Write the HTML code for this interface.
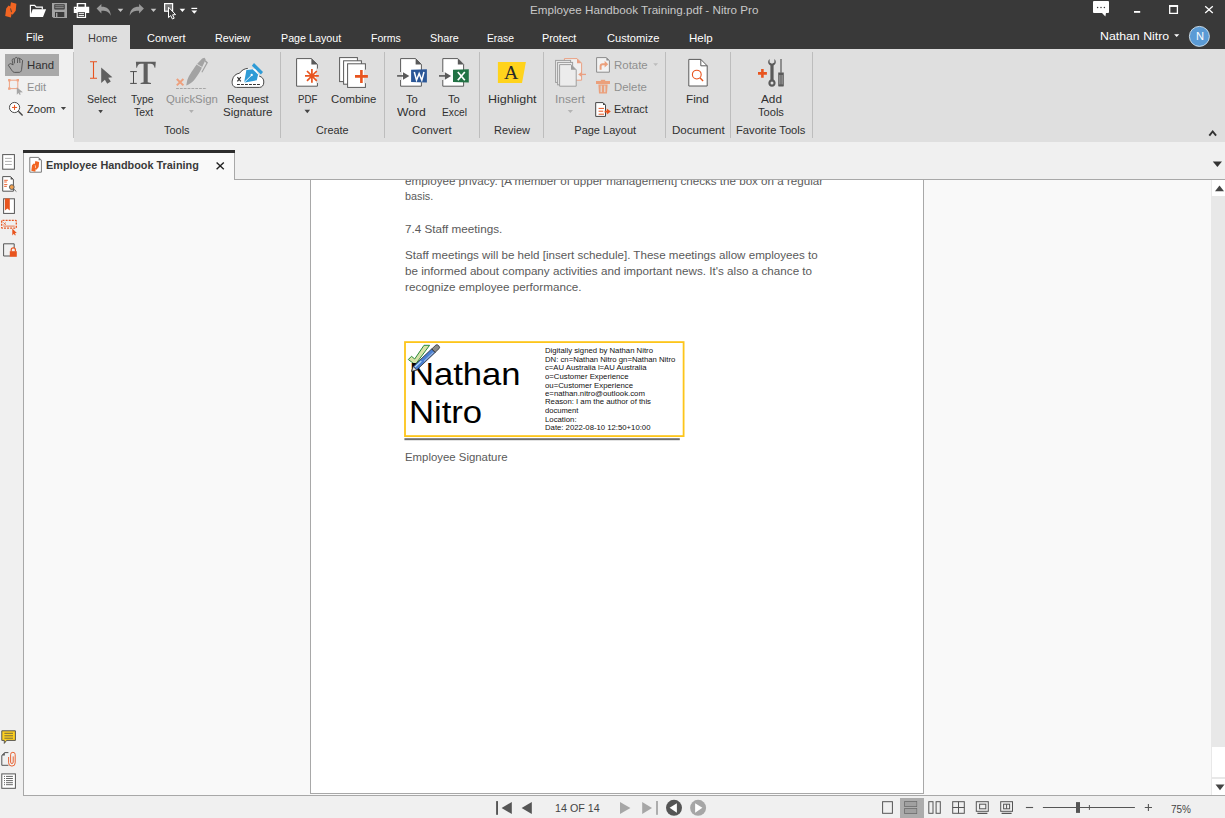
<!DOCTYPE html>
<html><head><meta charset="utf-8"><title>Nitro Pro</title>
<style>
html,body{margin:0;padding:0;}
body{width:1225px;height:818px;overflow:hidden;position:relative;background:#f0f0f0;font-family:"Liberation Sans",sans-serif;}
.b{position:absolute;}
.t{position:absolute;white-space:nowrap;line-height:1.117em;transform-origin:0 0;}
</style></head><body>
<div class="b" style="left:0;top:0;width:1225px;height:49px;background:#393939"></div>
<div class="b" style="left:73px;top:25px;width:57px;height:24px;background:#dfdfdf"></div>
<div class="b" style="left:74px;top:49px;width:1151px;height:93px;background:#dfdfdf"></div>
<div class="b" style="left:73px;top:52px;width:1px;height:86px;background:#c2c2c2"></div>
<div class="b" style="left:5px;top:54px;width:54px;height:22px;background:#a9a9a9"></div>
<div class="b" style="left:280px;top:52px;width:1px;height:86px;background:#bdbdbd"></div>
<div class="b" style="left:384px;top:52px;width:1px;height:86px;background:#bdbdbd"></div>
<div class="b" style="left:479px;top:52px;width:1px;height:86px;background:#bdbdbd"></div>
<div class="b" style="left:543px;top:52px;width:1px;height:86px;background:#bdbdbd"></div>
<div class="b" style="left:665px;top:52px;width:1px;height:86px;background:#bdbdbd"></div>
<div class="b" style="left:730px;top:52px;width:1px;height:86px;background:#bdbdbd"></div>
<div class="b" style="left:812px;top:52px;width:1px;height:86px;background:#bdbdbd"></div>
<!-- doc area -->
<div class="b" style="left:23px;top:179px;width:1202px;height:616px;background:#f9f9f9"></div>
<div class="b" style="left:234px;top:179px;width:991px;height:1px;background:#a8a8a8"></div>
<div class="b" style="left:23px;top:150px;width:1px;height:645px;background:#a8a8a8"></div>
<!-- tab -->
<div class="b" style="left:24px;top:150px;width:210px;height:29px;background:#f9f9f9"></div>
<div class="b" style="left:23px;top:150px;width:212px;height:3px;background:#2d2d2d"></div>
<div class="b" style="left:234px;top:153px;width:1px;height:26px;background:#a8a8a8"></div>
<!-- page -->
<div class="b" style="left:310px;top:180px;width:614px;height:614px;background:#ffffff"></div>
<div class="b" style="left:310px;top:180px;width:1px;height:614px;background:#a8a8a8"></div>
<div class="b" style="left:923px;top:180px;width:1px;height:614px;background:#a8a8a8"></div>
<div class="b" style="left:310px;top:793px;width:614px;height:1px;background:#a8a8a8"></div>
<!-- scrollbar -->
<div class="b" style="left:1211px;top:180px;width:14px;height:615px;background:#e8e8e8"></div>
<div class="b" style="left:1212px;top:180px;width:13px;height:16px;background:#ffffff"></div>
<div class="b" style="left:1212px;top:747px;width:13px;height:30px;background:#ffffff"></div>
<div class="b" style="left:1212px;top:779px;width:13px;height:16px;background:#ffffff"></div>
<!-- status bar -->
<div class="b" style="left:23px;top:795px;width:1202px;height:1px;background:#a8a8a8"></div>
<div class="b" style="left:900px;top:798px;width:24px;height:20px;background:#acacac"></div>

<svg class="b" style="left:0;top:0" width="1225" height="818" viewBox="0 0 1225 818">
<!-- ===== title bar ===== -->
<path fill="#f26522" fill-rule="evenodd" d="M11 2.2 L16.4 3.7 L15.7 10.8 L12.6 14.7 L11.6 13.8 L10.9 17.6 L5.2 16.1 L6.2 8.4 L8.6 5.6 L10.2 6.6 Z M10.2 8.2 L11 8.4 L11.8 11.8 L11.1 12.6 Z"/>
<!-- open folder -->
<path d="M30.4 16.4 V5.4 H34.6 L36.2 7.2 H42.3 V9.4" fill="none" stroke="#fff" stroke-width="1.2"/>
<path d="M32.6 9.3 H46.1 L43 16.9 H30 Z" fill="#fff"/>
<!-- save (gray) -->
<path d="M52 3 H67 V18 H53.5 L52 16.5 Z" fill="#a3a3a3"/>
<rect x="54.3" y="4.2" width="10.4" height="5.2" rx="0.6" fill="#393939"/>
<rect x="55.2" y="5.4" width="8.6" height="0.9" fill="#a3a3a3"/>
<rect x="55.2" y="7.3" width="8.6" height="0.9" fill="#a3a3a3"/>
<rect x="55" y="12" width="9.3" height="5" fill="#393939"/>
<rect x="56" y="12.8" width="1.4" height="4.2" fill="#a3a3a3"/>
<!-- print -->
<path d="M76.7 2.9 H86.1 V6.7 H89.2 V13 H86.1 V18 H76.7 V13 H73.8 V6.7 H76.7 Z" fill="#fff"/>
<rect x="78.2" y="4.2" width="6.4" height="2.5" fill="#393939"/>
<rect x="77.8" y="12.2" width="7.2" height="4.6" fill="#393939"/>
<rect x="78.7" y="13.2" width="5.4" height="0.9" fill="#fff"/>
<rect x="78.7" y="15" width="5.4" height="0.9" fill="#fff"/>
<circle cx="75.5" cy="8.5" r="0.6" fill="#393939"/>
<!-- undo/redo -->
<path d="M96.6 8.6 L101.4 4 V6.8 C106 6.6 110.6 8.6 110.8 15.8 C109 11.6 105.6 10.6 101.4 10.8 V13.4 Z" fill="#9a9a9a"/>
<path d="M143.9 8.6 L139.1 4 V6.8 C134.5 6.6 129.9 8.6 129.7 15.8 C131.5 11.6 134.9 10.6 139.1 10.8 V13.4 Z" fill="#9a9a9a"/>
<path d="M117.7 8.8 H123.3 L120.5 12 Z" fill="#c4c4c4"/>
<path d="M150.7 8.8 H156.3 L153.5 12 Z" fill="#c4c4c4"/>
<!-- select tool -->
<rect x="164.6" y="3.6" width="8" height="7.6" fill="#777" stroke="#fff" stroke-width="1.2"/>
<path d="M168.5 7.2 V17.6 L170.7 15.6 L172.4 19 L174.2 18.2 L172.6 14.8 L175.6 14.6 Z" fill="#393939" stroke="#fff" stroke-width="1"/>
<path d="M179.6 8.8 H185.2 L182.4 12 Z" fill="#fff"/>
<rect x="191.4" y="7.8" width="5.8" height="1.2" fill="#fff"/>
<path d="M191.4 10.4 H197.2 L194.3 13.8 Z" fill="#fff"/>
<!-- chat -->
<path d="M1093 2 Q1093 1.1 1094 1.1 H1108 Q1109 1.1 1109 2 V12.3 Q1109 13.1 1108 13.1 H1106 L1105.4 16.6 L1102 13.1 H1094 Q1093 13.1 1093 12.3 Z" fill="#fff"/>
<circle cx="1097.6" cy="7.4" r="0.75" fill="#393939"/><circle cx="1101" cy="7.4" r="0.75" fill="#393939"/><circle cx="1104.4" cy="7.4" r="0.75" fill="#393939"/>
<!-- window controls -->
<rect x="1134" y="11" width="6.2" height="1.8" fill="#fff"/>
<path d="M1169.7 5.9 H1177.4 V13.3 H1169.7 Z" fill="none" stroke="#fff" stroke-width="1.3"/>
<rect x="1169" y="5.1" width="9.1" height="1.8" fill="#fff"/>
<path d="M1205.2 6.3 L1212.8 12.9 M1212.8 6.3 L1205.2 12.9" stroke="#fff" stroke-width="1.3"/>
<!-- user -->
<path d="M1174.1 34.3 H1179.3 L1176.7 37.1 Z" fill="#fff"/>
<circle cx="1199.4" cy="36.4" r="10" fill="#5b9bd5" stroke="#d6e6f3" stroke-width="0.9"/>

<!-- ===== ribbon ===== -->
<!-- hand -->
<path d="M8.4 65.3 C9 64.2 9.8 63.6 10.4 63.6 C11.6 63.8 12.6 64.6 13.1 65 L12.2 60.6 C12.2 59.6 12.4 59 12.9 58.9 C13.6 58.6 14.2 58.8 14.4 59.4 C14.8 58 15.6 57.4 16.3 57.4 C17 57.4 17.5 57.9 17.7 58.4 C18.2 58 19 58 19.6 58.4 C20.6 59 22.4 59.8 22.6 60.6 L21.6 69.4 C21.4 71 20.6 72.2 19.6 72.3 L14.6 72.4 C13.4 72.4 12.4 71.4 11.4 69.7 Z M14.4 59.4 V63.4 M17.7 58.4 L17.5 63 M19.6 58.4 L19.9 63" fill="none" stroke="#484848" stroke-width="0.85"/>
<!-- edit -->
<rect x="9.4" y="80.2" width="8.4" height="8.4" fill="none" stroke="#efa483" stroke-width="1"/>
<rect x="8.1" y="79" width="2.4" height="2.4" fill="#efa483"/><rect x="16.6" y="79" width="2.4" height="2.4" fill="#efa483"/><rect x="8.1" y="87.4" width="2.4" height="2.4" fill="#efa483"/>
<path d="M16.8 87.2 V94.8 L18.4 93 L19.8 95 L20.8 94.2 L19.6 92.4 L22.9 92.3 Z" fill="#a5a5a5"/>
<!-- zoom -->
<circle cx="14.55" cy="107.5" r="5.1" fill="#fff" stroke="#444" stroke-width="0.95"/>
<path d="M18.4 111.3 L22.6 115.4" stroke="#444" stroke-width="1.4"/>
<path d="M14.55 104.9 V110 M12 107.45 H17.1" stroke="#e8531f" stroke-width="1"/>
<path d="M60.8 107 H66.1 L63.45 110 Z" fill="#444"/>
<!-- select -->
<path d="M93.5 61.5 V78.5 M90 61.8 H97 M90 78.3 H97" stroke="#e8531f" stroke-width="1.1" fill="none"/>
<path d="M101.2 67.4 V83.1 L104.9 79.8 L107.2 83.8 L110.8 81.4 L108.2 77.8 L112.4 77.2 Z" fill="#5f5f5f"/>
<path d="M98.3 110 H102.9 L100.6 113.3 Z" fill="#444"/>
<!-- type text -->
<path d="M135.9 61.8 H155.8 L155.3 67.8 L154.6 67.8 C154 65 153 63.8 150.6 63.8 H147.7 V82.2 L151 82.9 V84 H140.6 V82.9 L143.6 82.2 V63.8 H141 C138.6 63.8 137.6 65 137 67.8 H136.3 Z" fill="#5e5e5e"/>
<path d="M133.5 71.6 V83.4 M130.2 71.6 H136.8 M130.2 83.4 H136.8" stroke="#4a4a4a" stroke-width="1" fill="none"/>
<!-- quicksign -->
<path d="M186.2 85.6 L187.3 80 C189 75.6 191 72.6 196.6 64.5 L202.2 58.4 L204.5 57.7 L205.7 59.6 L201.7 68 C200.4 71 198.4 74.6 193.8 80.5 C191.8 82.6 189.6 84 186.2 85.6 Z" fill="#a3a3a3"/>
<path d="M205.4 60 L208 62.6 L202.4 72.6 L201.4 72.1 L206.3 63.1 L204.8 61.6 Z" fill="#a3a3a3"/>
<path d="M196.4 64 L202.4 67.5" stroke="#dfdfdf" stroke-width="0.9"/>
<path d="M176.8 79 L183.4 85.4 M183.4 79 L176.8 85.4" stroke="#eda07e" stroke-width="2"/>
<path d="M176.1 88.5 H206.8" stroke="#a0a0a0" stroke-width="0.9" stroke-dasharray="2.8 1.03"/>
<path d="M189 110 H193.8 L191.4 113 Z" fill="#b0b0b0"/>
<!-- request signature -->
<path d="M236.5 87.4 C232.4 87.4 231.6 82.8 232.4 80 C233.2 76 236 73.6 239.6 73.2 C241.4 70.4 244.4 68.6 248 68.4 L256 69 L259.2 76.1 C262 76.8 264 79 263.8 82 C263.8 85.5 262 87.4 259.4 87.4 Z" fill="#fff"/>
<path d="M247.8 68.4 C244.4 68.6 241.4 70.4 239.6 73.2 C236 73.6 233.2 76 232.4 80 C231.6 82.8 232.4 87.4 236.5 87.4 H259.4 C262 87.4 263.8 85.5 263.8 82 C264 79 262 76.8 259.2 76.1" fill="none" stroke="#3e3e3e" stroke-width="0.95"/>
<path d="M254 63.1 L263 72.1 L260.9 74.6 L251.9 65.8 Z" fill="#2e9bd6"/>
<path d="M246.4 70.1 L252.7 69.2 L258.1 74.4 L256.8 80.3 L244.8 82.5 L244.4 81.1 Z" fill="#2e9bd6"/>
<path d="M244.8 81.9 L251.2 75.6" stroke="#fff" stroke-width="0.9"/>
<circle cx="251.7" cy="75" r="1.15" fill="#fff"/>
<path d="M237.4 77.2 L240.8 81.4 M240.8 77.2 L237.4 81.4" stroke="#333" stroke-width="1.2"/>
<path d="M237 84.5 H260" stroke="#333" stroke-width="1" stroke-dasharray="2.9 1.1"/>
<!-- PDF -->
<path d="M296.6 58.6 H311.4 L317.4 64.4 V86.2 H296.6 Z" fill="#fff" stroke="#5a5a5a" stroke-width="1"/>
<path d="M311.4 58.6 L317.4 64.4 H311.4 Z" fill="#5a5a5a"/>
<rect x="316" y="68.6" width="3" height="14.4" fill="#dfdfdf"/>
<g stroke="#e8541e" stroke-width="1.7"><path d="M311.9 69 V82.8 M305 75.9 H318.8 M307 71 L316.8 80.8 M316.8 71 L307 80.8"/></g>
<path d="M304.5 109.7 H310.1 L307.3 113.2 Z" fill="#444"/>
<!-- combine -->
<g fill="#fff" stroke="#5a5a5a" stroke-width="1">
<rect x="339.6" y="57.6" width="17.8" height="24"/>
<rect x="343.6" y="60.8" width="17.8" height="23.4"/>
<rect x="347.6" y="63.8" width="17.8" height="23.6"/>
</g>
<rect x="364" y="69.6" width="3" height="13.6" fill="#dfdfdf"/>
<path d="M361.4 70 V82.9 M355 76.4 H367.9" stroke="#e8541e" stroke-width="2.6"/>
<!-- to word -->
<path d="M400.6 58.6 H415.6 L421.4 64.4 V86.2 H400.6 Z" fill="#fff" stroke="#5a5a5a" stroke-width="1"/>
<path d="M415.6 58.6 L421.4 64.4 H415.6 Z" fill="#5a5a5a"/>
<rect x="399" y="72" width="3" height="8" fill="#dfdfdf"/>
<path d="M397.1 75.9 H404" stroke="#5a5a5a" stroke-width="1.6"/>
<path d="M403 72.2 L409.3 75.9 L403 79.8 Z" fill="#5a5a5a"/>
<path d="M411.1 69.8 L426.9 69.2 V82.6 L411.1 82 Z" fill="#2b5797"/>
<path d="M414.3 72 L416.5 80.2 L419.15 73.6 L421.8 80.2 L424 72" fill="none" stroke="#fff" stroke-width="1.5" stroke-linejoin="miter"/>
<!-- to excel -->
<path d="M442.8 58.6 H457.8 L463.6 64.4 V86.2 H442.8 Z" fill="#fff" stroke="#5a5a5a" stroke-width="1"/>
<path d="M457.8 58.6 L463.6 64.4 H457.8 Z" fill="#5a5a5a"/>
<rect x="441.2" y="72" width="3" height="8" fill="#dfdfdf"/>
<path d="M439 75.9 H446" stroke="#5a5a5a" stroke-width="1.6"/>
<path d="M444.8 72.2 L451.1 75.9 L444.8 79.8 Z" fill="#5a5a5a"/>
<path d="M453 69.8 L468.8 69.2 V82.6 L453 82 Z" fill="#217244"/>
<path d="M457.8 72 L464.8 80.3 M464.8 72 L457.8 80.3" stroke="#fff" stroke-width="1.7"/>
<!-- highlight -->
<path d="M497.9 62 H525.9 L522 83 H497.9 Z" fill="#ffd31c"/>
<text x="503.9" y="78.9" font-family="Liberation Serif" font-size="18.5" fill="#2a2a2a" textLength="14.3" lengthAdjust="spacingAndGlyphs">A</text>
<!-- insert -->
<path d="M564.4 58.6 H577 L581.6 63.2 V80.2 H564.4 Z" fill="#efefef" stroke="#eaa083" stroke-width="1"/>
<path d="M577 58.6 L581.6 63.2 H577 Z" fill="#eaa083"/>
<g fill="#ececec" stroke="#9d9d9d" stroke-width="1">
<rect x="555.6" y="60.4" width="15" height="22"/>
<rect x="557.6" y="62.4" width="15" height="22.4"/>
<path d="M559.6 64.6 H571 L576.2 69.8 V86.2 H559.6 Z"/>
</g>
<path d="M571 64.6 L576.2 69.8 H571 Z" fill="#9d9d9d"/>
<path d="M579.8 74.4 H586" stroke="#eaa083" stroke-width="1.3"/>
<path d="M578.2 74.4 L582 71.6 V77.2 Z" fill="#eaa083"/>
<path d="M567.7 110 H573 L570.35 113 Z" fill="#b4b4b4"/>
<!-- rotate -->
<path d="M596.6 57.6 H606.4 L609.4 60.6 V72.2 H596.6 Z" fill="#f2f2f2" stroke="#8c8c8c" stroke-width="1"/>
<path d="M606.4 57.6 L609.4 60.6 H606.4 Z" fill="#8c8c8c"/>
<path d="M600.6 69.8 V66.2 C600.6 64.8 601.4 64.2 602.6 64.2 H605" fill="none" stroke="#eba07c" stroke-width="2"/>
<path d="M604.6 60.8 L608.2 64.2 L604.6 67.6 Z" fill="#eba07c"/>
<path d="M653.2 63.2 H658 L655.6 65.9 Z" fill="#bcbcbc"/>
<!-- delete -->
<rect x="596" y="81" width="14" height="3" fill="#eba07c"/>
<rect x="600.8" y="79.8" width="4.4" height="1.6" fill="#eba07c"/>
<path d="M598.4 84.4 H607.6 L607 93.6 H599 Z" fill="#eba07c"/>
<rect x="600.6" y="85.6" width="1.2" height="6.6" fill="#dfdfdf"/>
<rect x="604.2" y="85.6" width="1.2" height="6.6" fill="#dfdfdf"/>
<!-- extract -->
<path d="M595.7 102.6 H603 L605.5 105.1 V116.4 H595.7 Z" fill="#fff" stroke="#444" stroke-width="1"/>
<path d="M603 102.6 L605.5 105.1 H603 Z" fill="#444"/>
<path d="M598.6 108.4 H604 M598.6 111.2 H603.2 M598.6 114.2 H604" stroke="#e8541e" stroke-width="1"/>
<path d="M604.6 111.6 H607.4" stroke="#e8541e" stroke-width="1.8"/>
<path d="M606.8 108.6 L610.8 111.6 L606.8 114.6 Z" fill="#e8541e"/>
<!-- find -->
<path d="M688.8 59.4 H700.8 L707.2 65.8 V86 H688.8 Z" fill="#fff" stroke="#5a5a5a" stroke-width="1"/>
<path d="M700.8 59.4 V65.8 H707.2" fill="none" stroke="#5a5a5a" stroke-width="1"/>
<circle cx="696.8" cy="74.6" r="4.4" fill="none" stroke="#e8541e" stroke-width="1.1"/>
<path d="M699.9 77.7 L703.1 80.9" stroke="#e8541e" stroke-width="1.4"/>
<!-- add tools -->
<path d="M762.4 69.1 V77.7 M758 73.4 H766.9" stroke="#e8541e" stroke-width="2.6"/>
<path d="M769.6 59 C767.6 60.6 767.6 64.2 770.4 65.4 V79.4 C767.6 80.6 767.4 86.6 772 86.8 C776.6 86.6 776.4 80.6 773.6 79.4 V65.4 C776.4 64.2 776.4 60.6 774.4 59 V62.6 L772 63.8 L769.6 62.6 Z" fill="#5a5a5a"/>
<circle cx="772" cy="83.1" r="1.5" fill="#dfdfdf"/>
<rect x="780.4" y="59" width="1.2" height="13.8" fill="#5a5a5a"/>
<path d="M778.2 72.6 H783.8 V85.4 Q783.8 86.6 782.6 86.6 H779.4 Q778.2 86.6 778.2 85.4 Z" fill="#5a5a5a"/>
<path d="M779.9 75 V84.4 M782.1 75 V84.4" stroke="#dfdfdf" stroke-width="0.6"/>
<!-- collapse chevron -->
<path d="M1209.3 135.6 L1212.7 131.4 L1216.1 135.6" fill="none" stroke="#333" stroke-width="1.9"/>

<!-- ===== tab strip ===== -->
<path d="M1212.8 161.6 H1222 L1217.4 167 Z" fill="#333"/>
<path d="M29.8 157.4 H38.6 L41.4 160.2 V172.2 H29.8 Z" fill="#fff" stroke="#7a7a7a" stroke-width="1" stroke-linejoin="miter"/>
<path d="M38.6 157.4 L41.4 160.2 H38.6 Z" fill="#777"/>
<path transform="translate(27.66 159.46) scale(0.7)" fill="#f26522" fill-rule="evenodd" d="M11 2.2 L16.4 3.7 L15.7 10.8 L12.6 14.7 L11.6 13.8 L10.9 17.6 L5.2 16.1 L6.2 8.4 L8.6 5.6 L10.2 6.6 Z M10.2 8.2 L11 8.4 L11.8 11.8 L11.1 12.6 Z"/>
<path d="M216.6 162.4 L223.8 169.2 M223.8 162.4 L216.6 169.2" stroke="#222" stroke-width="1.4"/>
<path d="M1215 191.2 L1219.5 185.6 L1224 191.2 Z" fill="#444"/>
<path d="M1215.5 784.6 L1220 790.2 L1224.5 784.6 Z" fill="#444"/>

<!-- ===== left sidebar ===== -->
<rect x="2.7" y="154.6" width="11.7" height="14.6" fill="#fff" stroke="#555" stroke-width="1"/>
<path d="M5 158.4 H11.8 M5 161.4 H11.8 M5 164.5 H11.8" stroke="#a0a0a0" stroke-width="0.8"/>
<path d="M2.7 176.6 H10.6 L13.4 179.4 V191.2 H2.7 Z" fill="#fff" stroke="#555" stroke-width="1"/>
<path d="M10.6 176.6 L13.4 179.4 H10.6 Z" fill="#555"/>
<path d="M4.2 180.3 H7.8 M4.2 182 H6.8 M4.2 184.6 H7.4 M4.2 186.4 H6.8" stroke="#e8541e" stroke-width="0.9"/>
<circle cx="11.8" cy="187.1" r="2.4" fill="#f0a050" stroke="#555" stroke-width="0.9"/>
<path d="M13.6 188.9 L16.4 191.6" stroke="#555" stroke-width="0.9"/>
<rect x="3.6" y="198.8" width="10.8" height="14.6" fill="#fff" stroke="#555" stroke-width="1"/>
<path d="M4.9 198.4 H9.8 V210.6 L7.35 208.4 L4.9 210.6 Z" fill="#e8541e"/>
<rect x="1.7" y="220.4" width="14.6" height="7.8" rx="0.8" fill="none" stroke="#e8541e" stroke-width="1.3" stroke-dasharray="2 1.1"/>
<path d="M3.4 222.4 L6 224.9 M6 222.4 L3.4 224.9" stroke="#e8541e" stroke-width="0.7"/>
<path d="M3.3 226.1 H14.7" stroke="#e8541e" stroke-width="0.8"/>
<path d="M12.3 228.6 V235.4 L13.8 233.8 L15 235.5 L15.8 235 L14.8 233.2 L16.8 233 Z" fill="#e8541e"/>
<path d="M14.2 248 V243.8 H3.6 V256 H10" fill="none" stroke="#555" stroke-width="1"/>
<rect x="9.8" y="251.2" width="7" height="5.6" fill="#e8541e"/>
<path d="M11.2 251.4 V249.8 C11.2 247.2 15.4 247.2 15.4 249.8 V251.4" fill="none" stroke="#e8541e" stroke-width="1.2"/>
<!-- bottom sidebar -->
<path d="M1.8 730.8 H15.4 V740.4 H6.6 L4.3 743.4 V740.4 H1.8 Z" fill="#ffd11f" stroke="#555" stroke-width="1"/>
<path d="M4.4 733.3 H13 M4.4 735.8 H13 M4.4 738.2 H13" stroke="#4a4a4a" stroke-width="0.75"/>
<path d="M1.8 765.3 V755.4 L4.8 752.6 H8.4 M1.8 765.3 H8.4" fill="none" stroke="#555" stroke-width="1"/>
<path d="M1.8 755.4 L4.8 752.6 V755.4 Z" fill="#555"/>
<path d="M13.2 756.4 V762.2 A1.3 1.3 0 0 1 10.6 762.2 V754.6 A2.3 2.3 0 0 1 15.2 754.6 V762.8 A3.3 3.3 0 0 1 8.6 762.8 V757" fill="none" stroke="#e8541e" stroke-width="0.9"/>
<rect x="1.8" y="773.9" width="13.6" height="14.4" fill="#fff" stroke="#555" stroke-width="1"/>
<path d="M4 776.4 H5 M4 778.5 H5 M4 780.6 H5 M4 782.7 H5 M4 784.7 H5" stroke="#555" stroke-width="0.9"/>
<path d="M6 776.4 H12.9 M6 778.5 H12.9 M6 780.6 H12.9 M6 782.7 H12.9 M6 784.7 H12.9" stroke="#555" stroke-width="0.9"/>

<!-- ===== signature ===== -->
<rect x="405" y="342.1" width="278.6" height="94" fill="none" stroke="#fdc51a" stroke-width="1.8"/>
<rect x="404.4" y="438.2" width="275.4" height="2" fill="#6e6e6e"/>
<path d="M408.3 359.5 L411.5 356.3 L414.7 359 L424 345.3 L429.6 345.3 L415.2 364.7 Z" fill="#d6e2a8" stroke="#2a8a3a" stroke-width="1"/>
<!-- ===== status bar ===== -->
<rect x="496.1" y="801.1" width="1.9" height="13.7" fill="#555"/>
<path d="M501.6 808 L511.8 801.9 V814 Z" fill="#555"/>
<path d="M521.6 808 L531.8 801.9 V814 Z" fill="#555"/>
<path d="M630.4 808 L620 801.9 V814 Z" fill="#a6a6a6"/>
<path d="M652 808 L642.2 801.9 V814 Z" fill="#a6a6a6"/>
<rect x="656.1" y="801" width="1.8" height="13.8" fill="#a6a6a6"/>
<circle cx="674" cy="807.8" r="8" fill="#555"/>
<path d="M669.6 807.8 L676.9 803.3 V812.7 Z" fill="#fff"/>
<circle cx="698.1" cy="807.8" r="8" fill="#a6a6a6"/>
<path d="M702.4 807.8 L695.1 803.3 V812.7 Z" fill="#fff"/>
<g fill="none" stroke="#555" stroke-width="1">
<rect x="882.6" y="801.7" width="9.8" height="11.6"/>
<rect x="904.8" y="801.7" width="11.8" height="4.6"/>
<rect x="904.8" y="808.7" width="11.8" height="4.6"/>
<rect x="928.8" y="801.7" width="4.2" height="11.6"/>
<rect x="936.1" y="801.7" width="4.2" height="11.6"/>
<rect x="952.7" y="801.7" width="11.6" height="11.6"/>
<path d="M958.5 801.7 V813.3 M952.7 807.5 H964.3"/>
<rect x="976.3" y="801.7" width="12" height="9.6"/>
<rect x="979.6" y="804.2" width="6.2" height="4.6"/>
<rect x="1000.7" y="801.7" width="11.8" height="9.6"/>
<rect x="1003.6" y="804.2" width="6" height="4.6"/>
<path d="M1006.6 804.2 V808.8"/>
</g>
<rect x="904.8" y="801.7" width="11.8" height="4.6" fill="#a0a0a0"/>
<rect x="904.8" y="808.7" width="11.8" height="4.6" fill="#a0a0a0"/>
<path d="M977.4 813.4 H987.4 M1001.6 813.4 H1011.6" stroke="#555" stroke-width="1.2"/>
<path d="M1025.9 807.5 H1033.1" stroke="#555" stroke-width="1.1"/>
<path d="M1042.9 807.5 H1134.9" stroke="#555" stroke-width="1.1"/>
<rect x="1076" y="802.1" width="4" height="10.8" fill="#555"/>
<path d="M1089.4 805 V809.9" stroke="#555" stroke-width="1"/>
<path d="M1144.8 807.5 H1152 M1148.4 803.9 V811.1" stroke="#555" stroke-width="1.1"/>

</svg>
<div class="b" style="left:24px;top:180px;width:1187px;height:615px;overflow:hidden;"><div class="b" style="left:-24px;top:-180px;width:1225px;height:818px;">
<div id="t47" class="t" style="left:404.50px;top:174.69px;font-size:11.5px;color:#5a5a5a;transform:scaleX(1.0099);">employee privacy. [A member of upper management] checks the box on a regular</div>
</div></div>
<div id="t0" class="t" style="left:530.00px;top:3.89px;font-size:11.5px;color:#c8c8c8;transform:scaleX(1.0122);">Employee Handbook Training.pdf - Nitro Pro</div>
<div id="t1" class="t" style="left:25.60px;top:30.79px;font-size:11.5px;color:#ffffff;transform:scaleX(0.9485);">File</div>
<div id="t2" class="t" style="left:87.60px;top:31.79px;font-size:11.5px;color:#3c3c3c;transform:scaleX(0.9544);">Home</div>
<div id="t3" class="t" style="left:146.70px;top:31.79px;font-size:11.5px;color:#ffffff;transform:scaleX(0.9569);">Convert</div>
<div id="t4" class="t" style="left:215.00px;top:31.79px;font-size:11.5px;color:#ffffff;transform:scaleX(0.9375);">Review</div>
<div id="t5" class="t" style="left:280.70px;top:31.79px;font-size:11.5px;color:#ffffff;transform:scaleX(0.9329);">Page Layout</div>
<div id="t6" class="t" style="left:371.40px;top:31.79px;font-size:11.5px;color:#ffffff;transform:scaleX(0.9169);">Forms</div>
<div id="t7" class="t" style="left:430.40px;top:31.79px;font-size:11.5px;color:#ffffff;transform:scaleX(0.9376);">Share</div>
<div id="t8" class="t" style="left:487.40px;top:31.79px;font-size:11.5px;color:#ffffff;transform:scaleX(0.8939);">Erase</div>
<div id="t9" class="t" style="left:542.40px;top:31.79px;font-size:11.5px;color:#ffffff;transform:scaleX(0.9426);">Protect</div>
<div id="t10" class="t" style="left:607.40px;top:31.79px;font-size:11.5px;color:#ffffff;transform:scaleX(0.9661);">Customize</div>
<div id="t11" class="t" style="left:689.40px;top:31.79px;font-size:11.5px;color:#ffffff;transform:scaleX(1.0019);">Help</div>
<div id="t12" class="t" style="left:1100.00px;top:29.79px;font-size:11.5px;color:#ffffff;transform:scaleX(1.0707);">Nathan Nitro</div>
<div id="t13" class="t" style="left:1195.90px;top:31.10px;font-size:10.5px;color:#ffffff;transform:scaleX(1.0571);">N</div>
<div id="t14" class="t" style="left:27.40px;top:59.05px;font-size:11px;color:#303030;transform:scaleX(1.0314);">Hand</div>
<div id="t15" class="t" style="left:27.40px;top:81.05px;font-size:11px;color:#8f8f8f;transform:scaleX(1.0107);">Edit</div>
<div id="t16" class="t" style="left:27.40px;top:103.05px;font-size:11px;color:#303030;transform:scaleX(1.0088);">Zoom</div>
<div id="t17" class="t" style="left:86.50px;top:93.05px;font-size:11px;color:#303030;transform:scaleX(0.9536);">Select</div>
<div id="t18" class="t" style="left:131.40px;top:93.05px;font-size:11px;color:#303030;transform:scaleX(0.9440);">Type</div>
<div id="t19" class="t" style="left:133.60px;top:106.05px;font-size:11px;color:#303030;transform:scaleX(0.9494);">Text</div>
<div id="t20" class="t" style="left:166.20px;top:93.05px;font-size:11px;color:#8f8f8f;transform:scaleX(1.0357);">QuickSign</div>
<div id="t21" class="t" style="left:227.40px;top:93.05px;font-size:11px;color:#303030;transform:scaleX(1.0143);">Request</div>
<div id="t22" class="t" style="left:223.30px;top:106.05px;font-size:11px;color:#303030;transform:scaleX(1.0517);">Signature</div>
<div id="t23" class="t" style="left:164.40px;top:123.55px;font-size:11px;color:#303030;transform:scaleX(0.9970);">Tools</div>
<div id="t24" class="t" style="left:298.40px;top:93.05px;font-size:11px;color:#303030;transform:scaleX(0.8797);">PDF</div>
<div id="t25" class="t" style="left:331.40px;top:93.05px;font-size:11px;color:#303030;transform:scaleX(1.0318);">Combine</div>
<div id="t26" class="t" style="left:316.20px;top:123.55px;font-size:11px;color:#303030;transform:scaleX(0.9848);">Create</div>
<div id="t27" class="t" style="left:406.00px;top:93.05px;font-size:11px;color:#303030;transform:scaleX(1.0087);">To</div>
<div id="t28" class="t" style="left:397.00px;top:106.05px;font-size:11px;color:#303030;transform:scaleX(1.1054);">Word</div>
<div id="t29" class="t" style="left:447.80px;top:93.05px;font-size:11px;color:#303030;transform:scaleX(1.0174);">To</div>
<div id="t30" class="t" style="left:441.60px;top:106.05px;font-size:11px;color:#303030;transform:scaleX(0.9261);">Excel</div>
<div id="t31" class="t" style="left:412.30px;top:123.55px;font-size:11px;color:#303030;transform:scaleX(1.0322);">Convert</div>
<div id="t32" class="t" style="left:488.20px;top:93.05px;font-size:11px;color:#303030;transform:scaleX(1.1346);">Highlight</div>
<div id="t33" class="t" style="left:494.30px;top:123.55px;font-size:11px;color:#303030;transform:scaleX(0.9966);">Review</div>
<div id="t34" class="t" style="left:554.91px;top:93.05px;font-size:11px;color:#8f8f8f;transform:scaleX(1.0887);">Insert</div>
<div id="t35" class="t" style="left:614.20px;top:59.05px;font-size:11px;color:#8f8f8f;transform:scaleX(1.0405);">Rotate</div>
<div id="t36" class="t" style="left:614.20px;top:81.05px;font-size:11px;color:#8f8f8f;transform:scaleX(1.0354);">Delete</div>
<div id="t37" class="t" style="left:614.20px;top:103.05px;font-size:11px;color:#303030;transform:scaleX(0.9832);">Extract</div>
<div id="t38" class="t" style="left:574.30px;top:123.55px;font-size:11px;color:#303030;">Page Layout</div>
<div id="t39" class="t" style="left:686.20px;top:93.05px;font-size:11px;color:#303030;transform:scaleX(1.0714);">Find</div>
<div id="t40" class="t" style="left:672.30px;top:123.55px;font-size:11px;color:#303030;transform:scaleX(1.0524);">Document</div>
<div id="t41" class="t" style="left:761.20px;top:93.05px;font-size:11px;color:#303030;transform:scaleX(1.0692);">Add</div>
<div id="t42" class="t" style="left:758.00px;top:106.05px;font-size:11px;color:#303030;transform:scaleX(1.0084);">Tools</div>
<div id="t43" class="t" style="left:736.40px;top:123.55px;font-size:11px;color:#303030;transform:scaleX(1.0164);">Favorite Tools</div>
<div id="t44" class="t" style="left:45.70px;top:159.09px;font-size:11.5px;color:#3a3a3a;font-weight:bold;transform:scaleX(0.9453);">Employee Handbook Training</div>
<div id="t45" class="t" style="left:555.40px;top:802.04px;font-size:11px;color:#444444;transform:scaleX(0.9751);">14 OF 14</div>
<div id="t46" class="t" style="left:1171.40px;top:803.44px;font-size:11px;color:#444444;transform:scaleX(0.9085);">75%</div>
<div id="t48" class="t" style="left:404.50px;top:189.69px;font-size:11.5px;color:#5a5a5a;transform:scaleX(0.9381);">basis.</div>
<div id="t49" class="t" style="left:404.90px;top:222.69px;font-size:11.5px;color:#5a5a5a;transform:scaleX(1.0169);">7.4 Staff meetings.</div>
<div id="t50" class="t" style="left:404.50px;top:249.49px;font-size:11.5px;color:#5a5a5a;transform:scaleX(1.0082);">Staff meetings will be held [insert schedule]. These meetings allow employees to</div>
<div id="t51" class="t" style="left:404.50px;top:265.49px;font-size:11.5px;color:#5a5a5a;transform:scaleX(1.0150);">be informed about company activities and important news. It&#x27;s also a chance to</div>
<div id="t52" class="t" style="left:404.50px;top:281.29px;font-size:11.5px;color:#5a5a5a;transform:scaleX(1.0151);">recognize employee performance.</div>
<div id="t53" class="t" style="left:404.70px;top:450.69px;font-size:11.5px;color:#5a5a5a;transform:scaleX(0.9906);">Employee Signature</div>
<div id="t54" class="t" style="left:409.34px;top:356.74px;font-size:32px;color:#000000;transform:scaleX(1.0816);">Nathan</div>
<div id="t55" class="t" style="left:409.34px;top:395.34px;font-size:32px;color:#000000;transform:scaleX(1.0824);">Nitro</div>
<div id="t56" class="t" style="left:544.70px;top:346.64px;font-size:7.8px;color:#111111;transform:scaleX(0.9923);">Digitally signed by Nathan Nitro</div>
<div id="t57" class="t" style="left:544.70px;top:355.54px;font-size:7.8px;color:#111111;transform:scaleX(0.9926);">DN: cn=Nathan Nitro gn=Nathan Nitro</div>
<div id="t58" class="t" style="left:544.70px;top:363.54px;font-size:7.8px;color:#111111;transform:scaleX(0.9882);">c=AU Australia l=AU Australia</div>
<div id="t59" class="t" style="left:544.70px;top:372.64px;font-size:7.8px;color:#111111;transform:scaleX(0.9961);">o=Customer Experience</div>
<div id="t60" class="t" style="left:544.70px;top:381.54px;font-size:7.8px;color:#111111;transform:scaleX(0.9982);">ou=Customer Experience</div>
<div id="t61" class="t" style="left:544.70px;top:390.44px;font-size:7.8px;color:#111111;transform:scaleX(0.9987);">e=nathan.nitro@outlook.com</div>
<div id="t62" class="t" style="left:544.70px;top:398.44px;font-size:7.8px;color:#111111;transform:scaleX(0.9942);">Reason: I am the author of this</div>
<div id="t63" class="t" style="left:544.70px;top:407.44px;font-size:7.8px;color:#111111;transform:scaleX(0.9751);">document</div>
<div id="t64" class="t" style="left:544.70px;top:416.34px;font-size:7.8px;color:#111111;transform:scaleX(0.9975);">Location:</div>
<div id="t65" class="t" style="left:544.70px;top:424.34px;font-size:7.8px;color:#111111;transform:scaleX(0.9908);">Date: 2022-08-10 12:50+10:00</div>
<svg class="b" style="left:0;top:0" width="1225" height="818" viewBox="0 0 1225 818">
<g transform="translate(411.7 371.3) rotate(-43.5)">
<path d="M0 0 L4.5 -2.5 H30 V2.5 H4.5 Z" fill="#4a7fd0" stroke="#222" stroke-width="0.7"/>
<path d="M4.5 -2.5 L0 0 L4.5 2.5 Z" fill="#ddd" stroke="#222" stroke-width="0.6"/>
<path d="M5.5 -0.8 H14" stroke="#bfe8ff" stroke-width="1.1"/>
<path d="M16 1.2 H29" stroke="#c8d8f0" stroke-width="0.8"/>
<path d="M30 -2.4 H35.6 Q37.2 -2.4 37.2 0 Q37.2 2.4 35.6 2.4 H30 Z" fill="#8a8a8a" stroke="#222" stroke-width="0.7"/>
</g>

</svg>
</body></html>
